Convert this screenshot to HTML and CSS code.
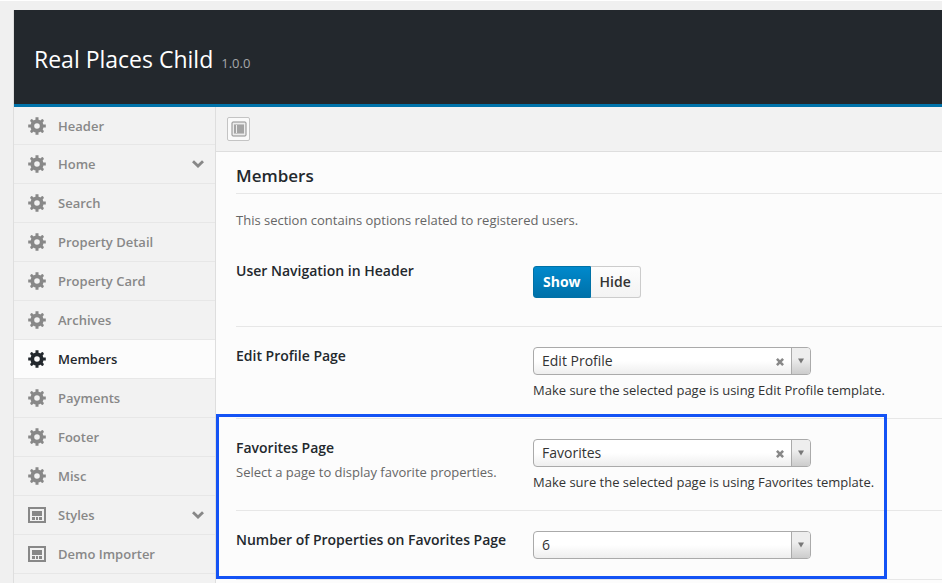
FILE: index.html
```html
<!DOCTYPE html>
<html lang="en">
<head>
<meta charset="utf-8">
<title>Real Places Child</title>
<meta name="viewport" content="width=device-width, initial-scale=1">
<link rel="stylesheet" href="styles.css">
</head>
<body>
<svg class="sprite" aria-hidden="true">
  <symbol id="gear" viewBox="0 0 18 18">
    <g fill="none" stroke="currentColor">
      <circle cx="9" cy="9" r="4.700" stroke-width="3.800"/>
      <g stroke-width="3">
        <path d="M9 .2V4M9 14v3.800M.2 9H4M14 9h3.800"/>
        <path d="M3.700 3.700l1.800 1.800M12.500 12.500l1.800 1.800M14.300 3.700l-1.800 1.800M5.500 12.500l-1.800 1.800" stroke-linecap="round"/>
      </g>
    </g>
  </symbol>
  <symbol id="panel" viewBox="0 0 18 18">
    <path fill="currentColor" fill-rule="evenodd" d="M0 1h18v16H0zM2 3v12h14V3z"/>
    <path fill="currentColor" d="M4 5h10v5H4zM4 11h3v3H4zM8 11h2v3H8zM11 11h3v3h-3z"/>
  </symbol>
  <symbol id="chevron" viewBox="0 0 12 8">
    <path fill="none" stroke="currentColor" stroke-width="2.800" d="M1 1.200l5 4.800 5-4.800"/>
  </symbol>
  <symbol id="cross" viewBox="0 0 8 8">
    <path fill="none" stroke="currentColor" stroke-width="2.600" d="M.9.9l6.200 6.200M7.100.9L.9 7.100"/>
  </symbol>
  <symbol id="triangle" viewBox="0 0 6 6">
    <path fill="currentColor" d="M0 .5h6L3 5.500z"/>
  </symbol>
</svg>
<div class="panel">
  <header class="panel-header">
    <h1>Real Places Child</h1>
    <span class="version">1.0.0</span>
  </header>
  <div class="panel-body">
    <nav class="sidebar">
      <ul>
        <li><a href="#header"><svg class="icon"><use href="#gear"/></svg><span>Header</span></a></li>
        <li><a href="#home"><svg class="icon"><use href="#gear"/></svg><span>Home</span><svg class="chevron"><use href="#chevron"/></svg></a></li>
        <li><a href="#search"><svg class="icon"><use href="#gear"/></svg><span>Search</span></a></li>
        <li><a href="#property-detail"><svg class="icon"><use href="#gear"/></svg><span>Property Detail</span></a></li>
        <li><a href="#property-card"><svg class="icon"><use href="#gear"/></svg><span>Property Card</span></a></li>
        <li><a href="#archives"><svg class="icon"><use href="#gear"/></svg><span>Archives</span></a></li>
        <li><a class="active" href="#members"><svg class="icon"><use href="#gear"/></svg><span>Members</span></a></li>
        <li><a href="#payments"><svg class="icon"><use href="#gear"/></svg><span>Payments</span></a></li>
        <li><a href="#footer"><svg class="icon"><use href="#gear"/></svg><span>Footer</span></a></li>
        <li><a href="#misc"><svg class="icon"><use href="#gear"/></svg><span>Misc</span></a></li>
        <li><a href="#styles"><svg class="icon"><use href="#panel"/></svg><span>Styles</span><svg class="chevron"><use href="#chevron"/></svg></a></li>
        <li><a href="#demo-importer"><svg class="icon"><use href="#panel"/></svg><span>Demo Importer</span></a></li>
      </ul>
    </nav>
    <main class="content">
      <div class="toolbar">
        <button class="expand" type="button" aria-label="Expand options">
          <svg viewBox="0 0 16 16">
            <rect x="1" y="1" width="14" height="14" rx="1" fill="#ececec" stroke="#8c8c8c"/>
            <path fill="#c4c4c4" d="M3 3h10v1H3zM3 12h10v1H3z"/>
            <path fill="#a4a4a4" d="M3 4h2v8H3zM6 4h7v8H6z"/>
          </svg>
        </button>
      </div>
      <form class="options">
        <h2>Members</h2>
        <p class="intro">This section contains options related to registered users.</p>
        <div class="row first">
          <div class="label" id="nav-label">User Navigation in Header</div>
          <div class="switch" role="group" aria-labelledby="nav-label">
            <button class="on" type="button" aria-pressed="true">Show</button>
            <button type="button" aria-pressed="false">Hide</button>
          </div>
        </div>
        <div class="row">
          <div><label class="label" for="edit-page">Edit Profile Page</label></div>
          <div>
            <div class="picker">
              <select id="edit-page"><option>Edit Profile</option></select>
              <button class="clear" type="button" aria-label="Clear edit profile page"><svg><use href="#cross"/></svg></button>
              <span class="arrow"><svg><use href="#triangle"/></svg></span>
            </div>
            <p class="hint">Make sure the selected page is using Edit Profile template.</p>
          </div>
        </div>
        <div class="highlighted">
          <div class="row">
            <div>
              <label class="label" for="fav-page">Favorites Page</label>
              <p class="sub">Select a page to display favorite properties.</p>
            </div>
            <div>
              <div class="picker">
                <select id="fav-page"><option>Favorites</option></select>
                <button class="clear" type="button" aria-label="Clear favorites page"><svg><use href="#cross"/></svg></button>
                <span class="arrow"><svg><use href="#triangle"/></svg></span>
              </div>
              <p class="hint">Make sure the selected page is using Favorites template.</p>
            </div>
          </div>
          <div class="row short">
            <div><label class="label" for="fav-count">Number of Properties on Favorites Page</label></div>
            <div class="picker">
              <select id="fav-count"><option>6</option></select>
              <span class="arrow"><svg><use href="#triangle"/></svg></span>
            </div>
          </div>
        </div>
      </form>
    </main>
  </div>
</div>
</body>
</html>
```
FILE: styles.css
```css
*, *::after { box-sizing: border-box; }

html { height: 100%; overflow: hidden; }

body {
  margin: 0;
  min-height: 100%;
  padding: 9px 0 0 13px;
  border-top: 1px solid #fff;
  border-right: 1px solid #fff;
  background: #f0f0f0;
  color: #333;
  font: 13px/20px "Open Sans", sans-serif;
}

h1, h2, p, ul { margin: 0; padding: 0; }
ul { list-style: none; }
button, select { font: inherit; color: inherit; margin: 0; }
svg { display: block; }
.sprite { position: absolute; width: 0; height: 0; }

.panel { border-left: 1px solid #dedede; }

.panel-header {
  display: flex;
  align-items: baseline;
  gap: 8px;
  padding: 33px 20px 29px;
  border-bottom: 3px solid #0073aa;
  background: #23282d;
  color: #fff;
}
.panel-header h1 { font-size: 23px; line-height: 32px; font-weight: 400; }
.version { font-size: 13px; color: #a5a7a9; }

.panel-body { display: flex; min-height: 490px; }

.sidebar {
  flex: 0 0 202px;
  border-right: 1px solid #dedede;
  background: #f2f2f2;
}
.sidebar a {
  display: flex;
  align-items: center;
  gap: 12px;
  height: 39px;
  padding: 0 11px 0 14px;
  border-bottom: 1px solid #e7e7e7;
  color: #888;
  font-weight: 600;
  text-decoration: none;
}
.sidebar li:first-child a { height: 38px; }
.sidebar a.active { background: #fcfcfc; color: #23282d; }
.sidebar span { flex: 1; }
.icon { width: 18px; height: 18px; }
.chevron { width: 12px; height: 8px; }

.content { flex: 1; min-width: 0; background: #fcfcfc; }

.toolbar {
  padding: 10px 11px;
  border-bottom: 1px solid #dedede;
  background: #f2f2f2;
}
.expand {
  display: grid;
  place-items: center;
  width: 23px;
  height: 24px;
  padding: 0;
  border: 1px solid #c4c4c4;
  border-radius: 2px;
  background: #fafafa;
}
.expand svg { width: 16px; height: 16px; }

.options { padding: 13px 0 0 20px; }
.options h2 {
  padding-bottom: 6px;
  border-bottom: 1px solid #e7e7e7;
  color: #23282d;
  font-size: 17px;
  line-height: 22px;
  font-weight: 600;
}
.intro { padding-top: 16px; color: #666; }

.row {
  display: grid;
  grid-template-columns: 297px 1fr;
  min-height: 92px;
  padding-top: 20px;
  border-bottom: 1px solid #e7e7e7;
}
.row.first { min-height: 97px; padding-top: 32px; }
.row.short { min-height: 69px; }
.label {
  display: block;
  margin-top: -1px;
  color: #23282d;
  font-size: 14px;
  font-weight: 600;
}
.sub { padding-top: 4px; color: #666; }
.hint { padding-top: 5px; }

.switch { display: flex; align-self: start; padding-top: 4px; }
.switch button {
  height: 32px;
  padding: 0 9px;
  border: 1px solid #ccc;
  border-left: 0;
  border-radius: 0 3px 3px 0;
  background: linear-gradient(#fdfdfd, #f3f3f3);
  font-size: 14px;
  font-weight: 600;
}
.switch .on {
  border: 1px solid #0071a6;
  border-radius: 3px 0 0 3px;
  background: linear-gradient(#0089cc, #0071a9);
  color: #fff;
  font-weight: 700;
}

.picker { position: relative; width: 278px; height: 28px; }
.picker select {
  display: block;
  width: 100%;
  height: 28px;
  padding: 0 50px 0 8px;
  border: 1px solid #aaa;
  border-radius: 4px;
  appearance: none;
  background: linear-gradient(#fff 50%, #eee);
  font-size: 14px;
}
.arrow {
  position: absolute;
  inset: 1px 1px 1px auto;
  display: grid;
  place-items: center;
  width: 19px;
  border-left: 1px solid #aaa;
  border-radius: 0 3px 3px 0;
  background: linear-gradient(#eee 40%, #ccc);
  color: #777;
  pointer-events: none;
}
.arrow svg { width: 6px; height: 6px; }
.clear {
  position: absolute;
  top: 11px;
  right: 27px;
  padding: 0;
  border: 0;
  background: none;
  color: #888;
}
.clear svg { width: 8px; height: 8px; }

.highlighted { position: relative; }
.highlighted::after {
  content: "";
  position: absolute;
  top: -5px;
  bottom: 1px;
  left: -20px;
  width: 671px;
  border: 3px solid #1453f5;
  pointer-events: none;
}
```
